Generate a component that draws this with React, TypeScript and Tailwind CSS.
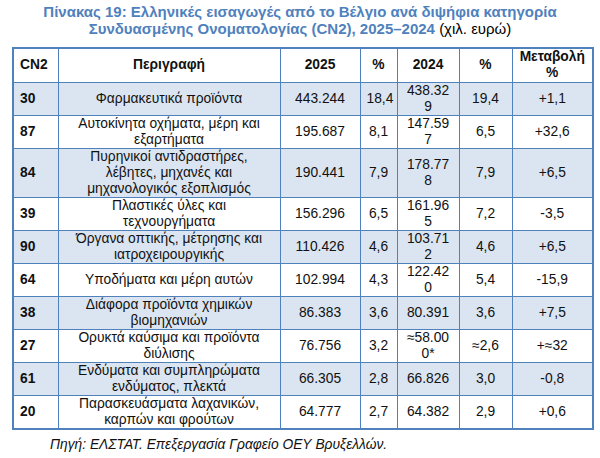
const ROWS = [
  { code: "30", desc: ["Φαρμακευτικά προϊόντα"], v25: "443.244", p25: "18,4", v24: ["438.32", "9"], p24: "19,4", chg: "+1,1" },
  { code: "87", desc: ["Αυτοκίνητα οχήματα, μέρη και", "εξαρτήματα"], v25: "195.687", p25: "8,1", v24: ["147.59", "7"], p24: "6,5", chg: "+32,6" },
  {
    code: "84",
    desc: ["Πυρηνικοί αντιδραστήρες,", "λέβητες, μηχανές και", "μηχανολογικός εξοπλισμός"],
    v25: "190.441",
    p25: "7,9",
    v24: ["178.77", "8"],
    p24: "7,9",
    chg: "+6,5",
  },
  { code: "39", desc: ["Πλαστικές ύλες και", "τεχνουργήματα"], v25: "156.296", p25: "6,5", v24: ["161.96", "5"], p24: "7,2", chg: "-3,5" },
  { code: "90", desc: ["Όργανα οπτικής, μέτρησης και", "ιατροχειρουργικής"], v25: "110.426", p25: "4,6", v24: ["103.71", "2"], p24: "4,6", chg: "+6,5" },
  { code: "64", desc: ["Υποδήματα και μέρη αυτών"], v25: "102.994", p25: "4,3", v24: ["122.42", "0"], p24: "5,4", chg: "-15,9" },
  { code: "38", desc: ["Διάφορα προϊόντα χημικών", "βιομηχανιών"], v25: "86.383", p25: "3,6", v24: ["80.391"], p24: "3,6", chg: "+7,5" },
  { code: "27", desc: ["Ορυκτά καύσιμα και προϊόντα", "διύλισης"], v25: "76.756", p25: "3,2", v24: ["≈58.00", "0*"], p24: "≈2,6", chg: "+≈32" },
  { code: "61", desc: ["Ενδύματα και συμπληρώματα", "ενδύματος, πλεκτά"], v25: "66.305", p25: "2,8", v24: ["66.826"], p24: "3,0", chg: "-0,8" },
  { code: "20", desc: ["Παρασκευάσματα λαχανικών,", "καρπών και φρούτων"], v25: "64.777", p25: "2,7", v24: ["64.382"], p24: "2,9", chg: "+0,6" },
];

function Lines({ lines }: { lines: string[] }) {
  return (
    <>
      {lines.map((l, i) => (
        <span key={i} className="block">
          {l}
        </span>
      ))}
    </>
  );
}

export default function App() {
  const cell = "border border-[#4f81bd] px-[6px] py-0 text-center align-middle";
  return (
    <div className="w-[600px] h-[458px] bg-white text-[#111] font-['Liberation_Sans',Arial,sans-serif] text-[13.8px] leading-[16px]">
      <div className="pt-[3px] text-center text-[15px] leading-[17px] font-bold text-[#4f81bd]">
        <div>Πίνακας 19: Ελληνικές εισαγωγές από το Βέλγιο ανά διψήφια κατηγορία</div>
        <div>
          Συνδυασμένης Ονοματολογίας (CN2), 2025–2024{" "}
          <span className="font-normal text-black">(χιλ. ευρώ)</span>
        </div>
      </div>

      <table className="ml-[12px] mt-[10px] w-[580px] table-fixed border-collapse border-2 border-[#4f81bd]">
        <colgroup>
          <col className="w-[45px]" />
          <col className="w-[222px]" />
          <col className="w-[80px]" />
          <col className="w-[37px]" />
          <col className="w-[62px]" />
          <col className="w-[53px]" />
          <col className="w-[81px]" />
        </colgroup>
        <thead>
          <tr className="h-[34px] font-bold">
            <th className={cell + " text-left"}>CN2</th>
            <th className={cell}>Περιγραφή</th>
            <th className={cell}>2025</th>
            <th className={cell}>%</th>
            <th className={cell}>2024</th>
            <th className={cell}>%</th>
            <th className={cell}>
              Μεταβολή
              <br />%
            </th>
          </tr>
        </thead>
        <tbody>
          {ROWS.map((r, i) => (
            <tr key={r.code} className={(i % 2 === 0 ? "bg-[#dbe5f1] " : "") + (r.desc.length > 2 ? "h-[48px]" : "h-[32px]")}>
              <td className={cell + " text-left font-bold"}>{r.code}</td>
              <td className={cell}>
                <Lines lines={r.desc} />
              </td>
              <td className={cell}>{r.v25}</td>
              <td className={cell}>{r.p25}</td>
              <td className={cell}>
                <Lines lines={r.v24} />
              </td>
              <td className={cell}>{r.p24}</td>
              <td className={cell}>{r.chg}</td>
            </tr>
          ))}
        </tbody>
      </table>

      <div className="mt-[7px] pl-[50px] italic text-[13.8px]">Πηγή: ΕΛΣΤΑΤ. Επεξεργασία Γραφείο ΟΕΥ Βρυξελλών.</div>
    </div>
  );
}
